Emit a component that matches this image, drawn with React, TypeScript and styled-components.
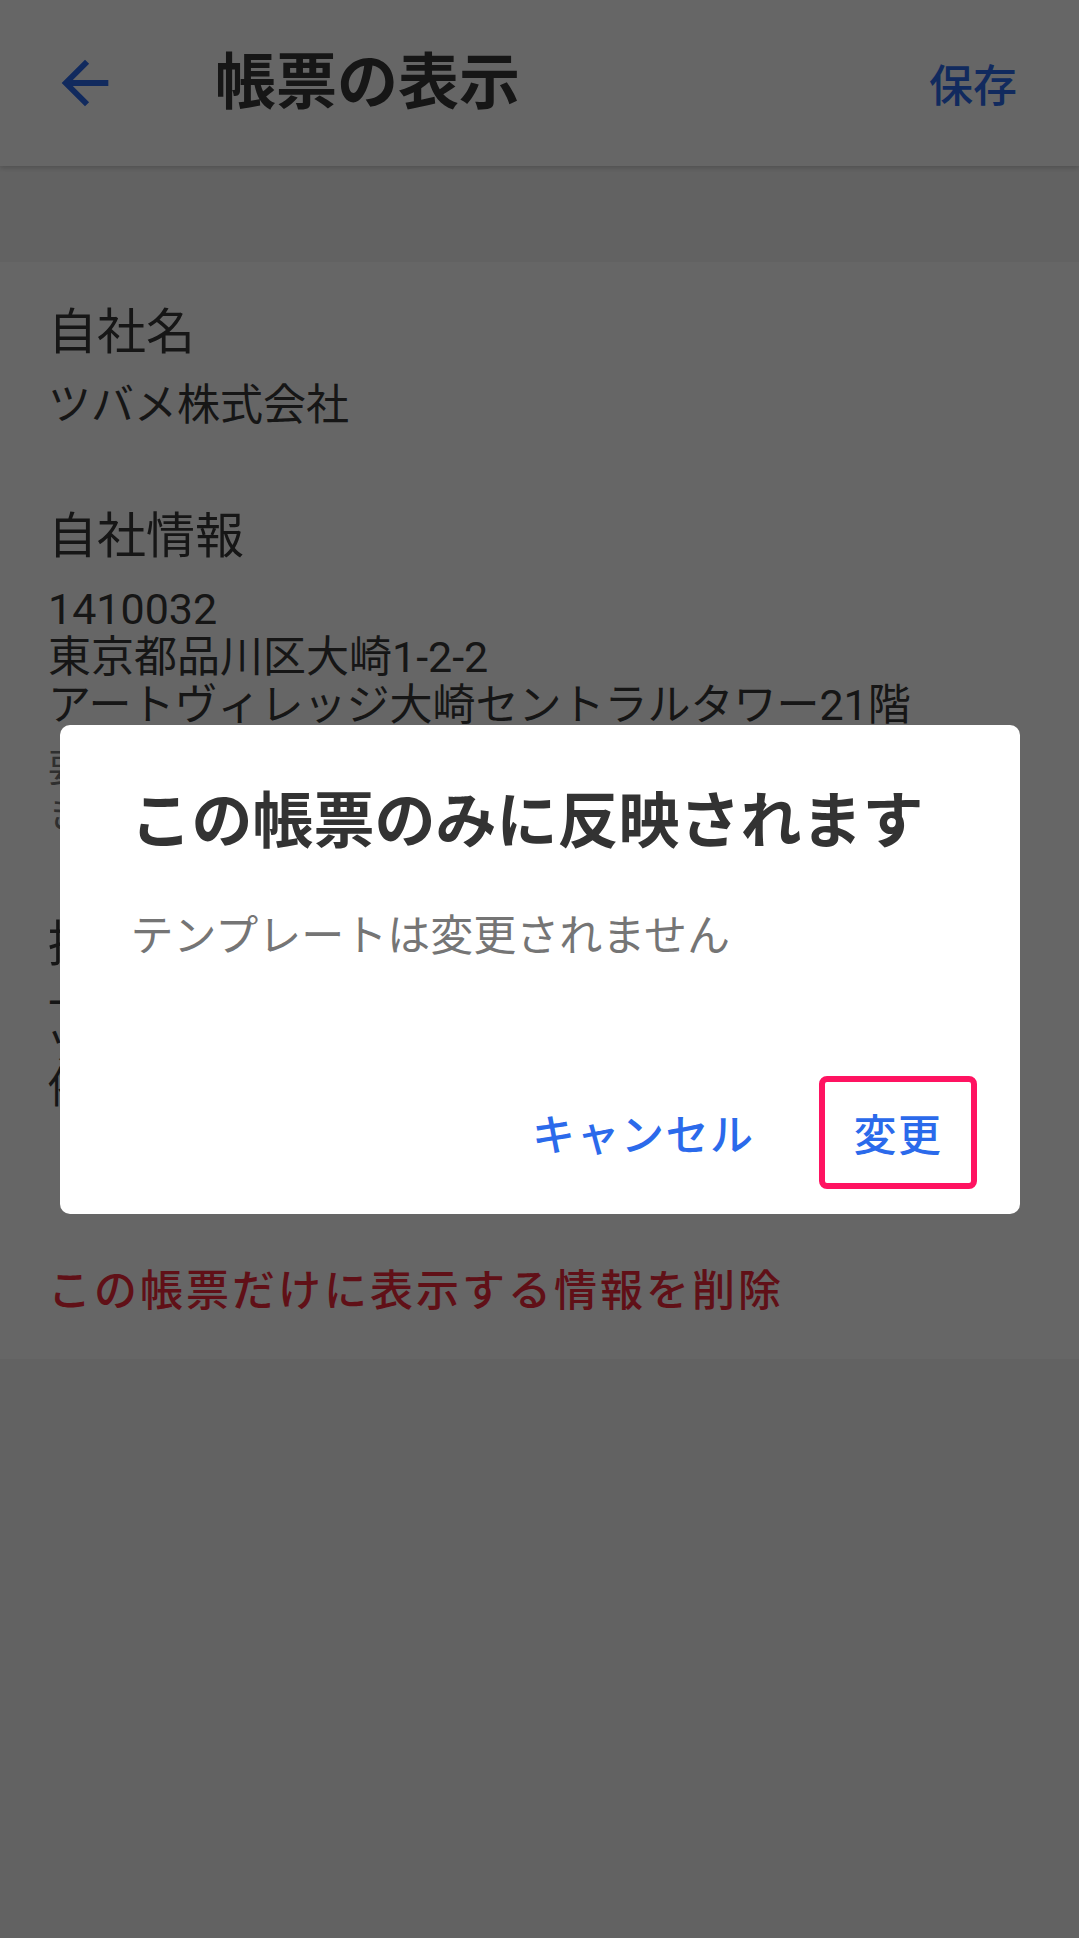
import React from 'react'
import styled, { createGlobalStyle } from 'styled-components'

const BLUE = '#2b6aeb'
const TEXT = '#383838'
const DANGER = '#f0283a'

const GlobalStyle = createGlobalStyle`
  html, body {
    margin: 0;
    padding: 0;
    background: #f5f5f5;
  }
  body {
    font-family: Roboto, "Noto Sans CJK JP", sans-serif;
    color: ${TEXT};
  }
`

const Screen = styled.div`
  min-height: 1938px;
  background: #f5f5f5;
`

const AppBar = styled.header`
  position: relative;
  z-index: 1;
  height: 166px;
  display: flex;
  align-items: center;
  padding: 0 62px 0 50px;
  background: #fff;
  box-shadow: 0 2px 5px rgba(0, 0, 0, 0.18);
`

const BackButton = styled.button`
  width: 70px;
  height: 70px;
  padding: 0;
  border: none;
  background: transparent;
  display: flex;
  color: ${BLUE};
`

const AppTitle = styled.h1`
  flex: 1;
  margin: 0 0 0 95px;
  font-size: 61px;
  font-weight: 700;
  line-height: 1;
  color: ${TEXT};
`

const SaveAction = styled.button`
  padding: 0;
  border: none;
  background: transparent;
  font-family: inherit;
  font-size: 44px;
  font-weight: 500;
  color: ${BLUE};
`

const Card = styled.section`
  margin-top: 96px;
  padding: 39px 48px 106px;
  background: #fff;
`

const Field = styled.div`
  & + & {
    margin-top: 76px;
  }
`

const Label = styled.div`
  font-size: 49px;
  line-height: 64px;
`

const Value = styled.div<{ $dense?: boolean }>`
  margin-top: ${({ $dense }) => ($dense ? '6px' : '16px')};
  font-size: 43px;
  line-height: ${({ $dense }) => ($dense ? '42px' : '48px')};
`

const Hint = styled.div`
  margin-top: 16px;
  font-size: 38px;
  line-height: 46px;
  color: #757575;
`

const DeleteRow = styled.button`
  width: 100%;
  height: 144px;
  display: flex;
  align-items: center;
  padding: 0 48px;
  border: none;
  background: #fff;
  font-family: inherit;
  font-size: 43px;
  font-weight: 500;
  letter-spacing: 3px;
  color: ${DANGER};
`

const Overlay = styled.div`
  position: fixed;
  inset: 0;
  z-index: 10;
  display: flex;
  align-items: center;
  justify-content: center;
  background: rgba(0, 0, 0, 0.6);
`

const Dialog = styled.div`
  width: 960px;
  background: #fff;
  border-radius: 10px;
`

const DialogTitle = styled.h2`
  margin: 0;
  padding: 57px 71px 0;
  font-size: 61px;
  font-weight: 700;
  line-height: 80px;
  color: #333;
`

const DialogText = styled.p`
  margin: 0;
  padding: 44px 71px 0;
  font-size: 43px;
  line-height: 60px;
  color: #757575;
`

const DialogActions = styled.div`
  display: flex;
  justify-content: flex-end;
  gap: 30px;
  padding: 110px 43px 25px;
`

const ActionButton = styled.button<{ $highlight?: boolean }>`
  height: 113px;
  padding: 0 28px 0 29px;
  border: 6px solid ${({ $highlight }) => ($highlight ? '#ff1361' : 'transparent')};
  border-radius: 8px;
  background: transparent;
  font-family: inherit;
  font-size: 43px;
  font-weight: 500;
  letter-spacing: 1.5px;
  color: ${BLUE};
`

const ArrowBack = () => (
  <svg width='70' height='70' viewBox='0 0 24 24' fill='currentColor'>
    <path d='M20 11H7.83l5.59-5.59L12 4l-8 8 8 8 1.41-1.41L7.83 13H20v-2z' />
  </svg>
)

interface FieldData {
  label: string
  lines: string[]
  hint?: string[]
  dense?: boolean
}

const fields: FieldData[] = [
  { label: '自社名', lines: ['ツバメ株式会社'] },
  {
    label: '自社情報',
    lines: ['1410032', '東京都品川区大崎1-2-2', 'アートヴィレッジ大崎セントラルタワー21階'],
    hint: ['要件に応じて電話番号やメールアドレスも', 'き載できます'],
  },
  {
    label: '振込先',
    lines: ['一二三銀行 大崎支店 普通 1234567', 'ツバメカブシキガイシャ', '依頼人名の前に請求書番号をご記入ください'],
    dense: true,
  },
]

export default function App() {
  return (
    <Screen>
      <GlobalStyle />
      <AppBar>
        <BackButton aria-label='戻る'>
          <ArrowBack />
        </BackButton>
        <AppTitle>帳票の表示</AppTitle>
        <SaveAction>保存</SaveAction>
      </AppBar>

      <Card>
        {fields.map((f) => (
          <Field key={f.label}>
            <Label>{f.label}</Label>
            <Value $dense={f.dense}>
              {f.lines.map((l) => (
                <div key={l}>{l}</div>
              ))}
            </Value>
            {f.hint && (
              <Hint>
                {f.hint.map((l) => (
                  <div key={l}>{l}</div>
                ))}
              </Hint>
            )}
          </Field>
        ))}
      </Card>
      <DeleteRow>この帳票だけに表示する情報を削除</DeleteRow>

      <Overlay>
        <Dialog role='dialog'>
          <DialogTitle>この帳票のみに反映されます</DialogTitle>
          <DialogText>テンプレートは変更されません</DialogText>
          <DialogActions>
            <ActionButton>キャンセル</ActionButton>
            <ActionButton $highlight>変更</ActionButton>
          </DialogActions>
        </Dialog>
      </Overlay>
    </Screen>
  )
}
